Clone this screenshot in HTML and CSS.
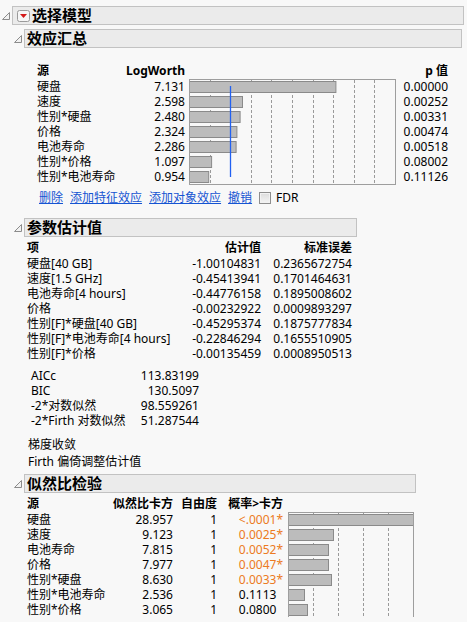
FILE: index.html
```html
<!DOCTYPE html>
<html lang="zh-CN">
<head>
<meta charset="utf-8">
<title>选择模型</title>
<link rel="stylesheet" href="styles.css">
</head>
<body>
<div class="report">
  <div class="node">
    <div class="node-head">
      <svg class="disc" viewBox="0 0 8 8"><polygon points="7.5,0.5 7.5,7.5 0.5,7.5"/></svg>
      <div class="title-box w-top">
        <span class="menu-btn"><svg viewBox="0 0 13 12"><rect x="0.5" y="0.5" width="12" height="11" rx="2" class="mb-box"/><polygon points="3,4 10,4 6.5,8" class="mb-arrow"/></svg></span>
        <span class="title">选择模型</span>
      </div>
    </div>
    <div class="node-body">

      <div class="node">
        <div class="node-head">
          <svg class="disc" viewBox="0 0 8 8"><polygon points="7.5,0.5 7.5,7.5 0.5,7.5"/></svg>
          <div class="title-box w-effects"><span class="title">效应汇总</span></div>
        </div>
        <div class="effects">
          <div class="effects-grid">
            <span class="th">源</span>
            <span class="th num">LogWorth</span>
            <span></span>
            <span class="th num">p 值</span>
            <svg class="chart chart-lw" viewBox="0 0 207 106">
              <g class="grid">
                <line x1="21.5" y1="1" x2="21.5" y2="105"/>
                <line x1="62.5" y1="1" x2="62.5" y2="105"/>
                <line x1="82.5" y1="1" x2="82.5" y2="105"/>
                <line x1="103.5" y1="1" x2="103.5" y2="105"/>
                <line x1="124.5" y1="1" x2="124.5" y2="105"/>
                <line x1="144.5" y1="1" x2="144.5" y2="105"/>
                <line x1="165.5" y1="1" x2="165.5" y2="105"/>
                <line x1="185.5" y1="1" x2="185.5" y2="105"/>
              </g>
              <g class="bars">
                <rect x="0.5" y="2.5" width="146.4" height="11"/>
                <rect x="0.5" y="17.5" width="53" height="11"/>
                <rect x="0.5" y="32.5" width="50.6" height="11"/>
                <rect x="0.5" y="47.5" width="47.4" height="11"/>
                <rect x="0.5" y="62.5" width="46.6" height="11"/>
                <rect x="0.5" y="77.5" width="22.1" height="11"/>
                <rect x="0.5" y="92.5" width="19.2" height="11"/>
              </g>
              <line class="ref" x1="41.5" y1="7" x2="41.5" y2="98"/>
              <rect class="frame" x="0.5" y="0.5" width="206" height="105"/>
            </svg>
            <span>硬盘</span><span class="num">7.131</span><span class="num">0.00000</span>
            <span>速度</span><span class="num">2.598</span><span class="num">0.00252</span>
            <span>性别*硬盘</span><span class="num">2.480</span><span class="num">0.00331</span>
            <span>价格</span><span class="num">2.324</span><span class="num">0.00474</span>
            <span>电池寿命</span><span class="num">2.286</span><span class="num">0.00518</span>
            <span>性别*价格</span><span class="num">1.097</span><span class="num">0.08002</span>
            <span>性别*电池寿命</span><span class="num">0.954</span><span class="num">0.11126</span>
          </div>
          <div class="links">
            <a href="#">删除</a>
            <a href="#">添加特征效应</a>
            <a href="#">添加对象效应</a>
            <a href="#">撤销</a>
            <label class="check"><span class="box"></span>FDR</label>
          </div>
        </div>
      </div>

      <div class="node node-est">
        <div class="node-head">
          <svg class="disc" viewBox="0 0 8 8"><polygon points="7.5,0.5 7.5,7.5 0.5,7.5"/></svg>
          <div class="title-box w-est"><span class="title">参数估计值</span></div>
        </div>
        <div class="est-grid">
          <span class="th">项</span><span class="th num">估计值</span><span class="th num">标准误差</span>
          <span>硬盘[40 GB]</span><span class="num">-1.00104831</span><span class="num">0.2365672754</span>
          <span>速度[1.5 GHz]</span><span class="num">-0.45413941</span><span class="num">0.1701464631</span>
          <span>电池寿命[4 hours]</span><span class="num">-0.44776158</span><span class="num">0.1895008602</span>
          <span>价格</span><span class="num">-0.00232922</span><span class="num">0.0009893297</span>
          <span>性别[F]*硬盘[40 GB]</span><span class="num">-0.45295374</span><span class="num">0.1875777834</span>
          <span>性别[F]*电池寿命[4 hours]</span><span class="num">-0.22846294</span><span class="num">0.1655510905</span>
          <span>性别[F]*价格</span><span class="num">-0.00135459</span><span class="num">0.0008950513</span>
        </div>
        <div class="stats-grid">
          <span>AICc</span><span class="num">113.83199</span>
          <span>BIC</span><span class="num">130.5097</span>
          <span>-2*对数似然</span><span class="num">98.559261</span>
          <span>-2*Firth 对数似然</span><span class="num">51.287544</span>
        </div>
        <div class="note note-first">梯度收敛</div>
        <div class="note">Firth 偏倚调整估计值</div>
      </div>

      <div class="node node-lr">
        <div class="node-head">
          <svg class="disc" viewBox="0 0 8 8"><polygon points="7.5,0.5 7.5,7.5 0.5,7.5"/></svg>
          <div class="title-box w-lr"><span class="title">似然比检验</span></div>
        </div>
        <div class="lr-grid">
          <span class="th">源</span>
          <span class="th num">似然比卡方</span>
          <span class="th num">自由度</span>
          <span class="th num">概率&gt;卡方</span>
          <span></span>
          <svg class="chart chart-lr" viewBox="0 0 126 106">
            <g class="grid">
              <line x1="25.5" y1="1" x2="25.5" y2="105"/>
              <line x1="50.5" y1="1" x2="50.5" y2="105"/>
              <line x1="75.5" y1="1" x2="75.5" y2="105"/>
              <line x1="100.5" y1="1" x2="100.5" y2="105"/>
            </g>
            <g class="bars">
              <rect x="0.5" y="2.5" width="125" height="11"/>
              <rect x="0.5" y="17.5" width="45" height="11"/>
              <rect x="0.5" y="32.5" width="40" height="11"/>
              <rect x="0.5" y="47.5" width="40" height="11"/>
              <rect x="0.5" y="62.5" width="43" height="11"/>
              <rect x="0.5" y="77.5" width="16" height="11"/>
              <rect x="0.5" y="92.5" width="19" height="11"/>
            </g>
            <rect class="frame" x="0.5" y="0.5" width="125" height="105"/>
          </svg>
          <span>硬盘</span><span class="num">28.957</span><span class="num">1</span><span class="num sig">&lt;.0001*</span>
          <span>速度</span><span class="num">9.123</span><span class="num">1</span><span class="num sig">0.0025*</span>
          <span>电池寿命</span><span class="num">7.815</span><span class="num">1</span><span class="num sig">0.0052*</span>
          <span>价格</span><span class="num">7.977</span><span class="num">1</span><span class="num sig">0.0047*</span>
          <span>性别*硬盘</span><span class="num">8.630</span><span class="num">1</span><span class="num sig">0.0033*</span>
          <span>性别*电池寿命</span><span class="num">2.536</span><span class="num">1</span><span class="num">0.1113<i class="ghost">*</i></span>
          <span>性别*价格</span><span class="num">3.065</span><span class="num">1</span><span class="num">0.0800<i class="ghost">*</i></span>
        </div>
      </div>

    </div>
  </div>
</div>
</body>
</html>
```

FILE: styles.css
```css
* { box-sizing: border-box; }

html, body {
  margin: 0;
  background: #f8f8f8;
}

body {
  font-family: "Noto Sans", "Noto Sans CJK SC", sans-serif;
  font-size: 12px;
  line-height: 15px;
  color: #000;
}

.report {
  padding: 6px 0 0 2px;
}

.node-head {
  display: flex;
  align-items: center;
  height: 19px;
}

.disc {
  width: 8px;
  height: 8px;
  margin-right: 2px;
  flex: none;
}

.disc polygon {
  fill: #f2f2f2;
  stroke: #8c8c8c;
  stroke-width: 1;
}

.title-box {
  height: 19px;
  border: 1px solid #c2c2c2;
  background: #ebebeb;
  display: flex;
  align-items: center;
  padding-left: 2px;
}

.title {
  font-size: 15px;
  font-weight: bold;
  line-height: 17px;
}

.w-top { width: 452px; padding-left: 4px; }
.w-effects { width: 438px; }
.w-est { width: 333px; }
.w-lr { width: 392px; }

.menu-btn {
  display: flex;
  width: 13px;
  height: 12px;
  margin-right: 2px;
}

.menu-btn svg { width: 13px; height: 12px; }
.mb-box { fill: #f6f6f6; stroke: #9a9a9a; }
.mb-arrow { fill: #d41a1a; }

.node-body {
  padding-left: 12px;
  padding-top: 4px;
}

.num { text-align: right; }
.th { font-weight: bold; line-height: 17px; }

/* Effect summary */
.effects {
  padding-left: 23px;
  padding-top: 14px;
}

.effects-grid {
  display: grid;
  grid-template-columns: 88px 60px 211px 52px;
  grid-template-rows: 17px repeat(7, 15px);
}

.chart-lw {
  grid-column: 3;
  grid-row: 2 / span 7;
  width: 207px;
  height: 106px;
  margin-left: 4px;
  overflow: visible;
}

.chart { display: block; }

.chart .grid line {
  stroke: #9a9a9a;
  stroke-width: 1;
  stroke-dasharray: 3 2;
}

.chart .bars rect {
  fill: #bcbcbc;
  stroke: #8a8a8a;
  stroke-width: 1;
}

.chart .frame {
  fill: none;
  stroke: #9e9e9e;
  stroke-width: 1;
}

.chart .ref {
  stroke: #2161f2;
  stroke-width: 1.3;
}

.links {
  display: flex;
  align-items: center;
  gap: 7px;
  margin: 6px 0 0 2px;
  height: 15px;
}

.links a {
  color: #1554d2;
  text-decoration: underline;
}

.check {
  display: flex;
  align-items: center;
  gap: 5px;
}

.check .box {
  width: 12px;
  height: 12px;
  border: 1px solid #8e8e8e;
  background: linear-gradient(#dcdcdc, #f4f4f4);
  box-shadow: inset 0 0 0 1px #f2f2f2;
}

/* Parameter estimates */
.node-est { margin-top: 13px; }

.est-grid {
  display: grid;
  grid-template-columns: 163px 71px 91px;
  grid-template-rows: 17px repeat(7, 15px);
  margin: 2px 0 0 13px;
}

.stats-grid {
  display: grid;
  grid-template-columns: 109px 59px;
  grid-auto-rows: 15px;
  margin: 7px 0 0 17px;
}

.note {
  margin: 2px 0 0 14px;
}

.note-first { margin-top: 9px; }

/* Likelihood ratio tests */
.node-lr { margin-top: 5px; }

.lr-grid {
  display: grid;
  grid-template-columns: 86px 60px 44px 66px 131px;
  grid-template-rows: 17px repeat(7, 15px);
  margin: 2px 0 0 13px;
}

.chart-lr {
  grid-column: 5;
  grid-row: 2 / span 7;
  width: 126px;
  height: 106px;
  margin-left: 5px;
  overflow: visible;
}

.sig { color: #ec7a22; }

.ghost {
  font-style: normal;
  visibility: hidden;
}
```
